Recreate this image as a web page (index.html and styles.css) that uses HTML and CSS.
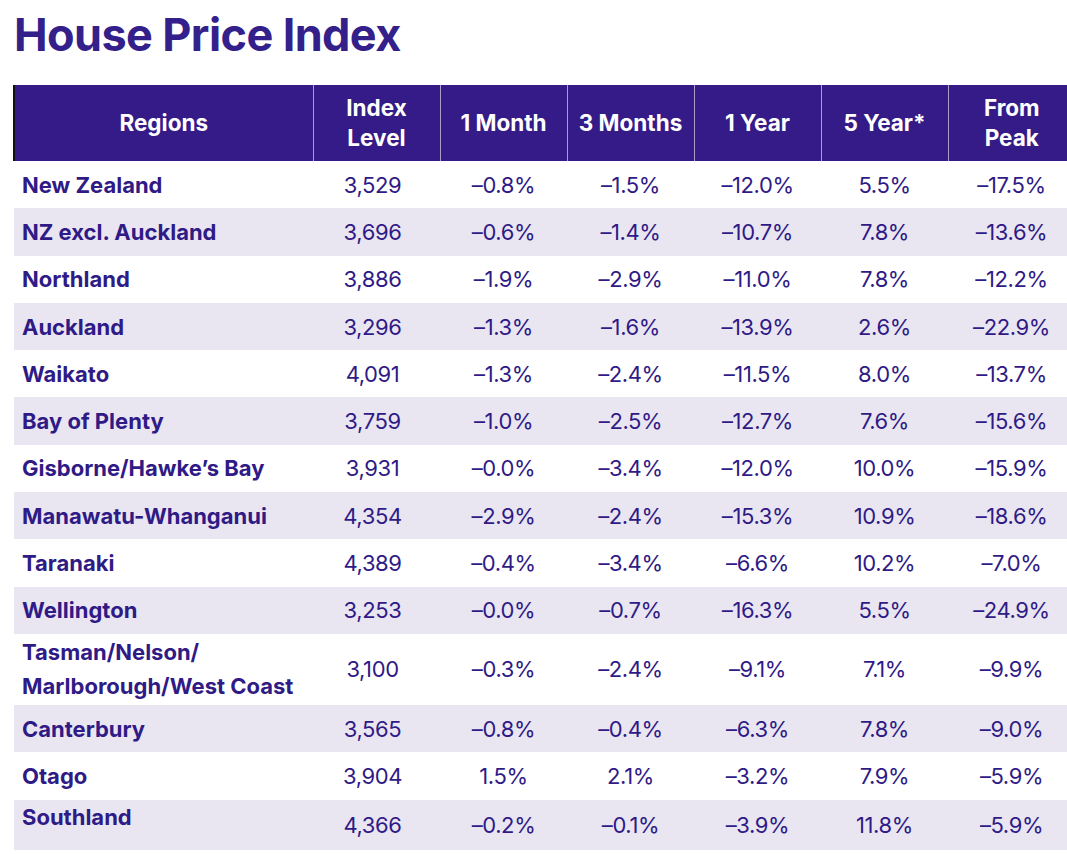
FILE: index.html
```html
<!DOCTYPE html>
<html lang="en">
<head>
<meta charset="utf-8">
<title>House Price Index</title>
<link rel="stylesheet" href="styles.css">
</head>
<body>
<div class="page">
  <h1 class="title">House Price Index</h1>
  <div class="table-wrap">
    <table class="hpi">
      <colgroup>
        <col class="c-region"><col class="c-num"><col class="c-num"><col class="c-num"><col class="c-num"><col class="c-num"><col class="c-num">
      </colgroup>
      <thead>
        <tr>
          <th class="first">Regions</th>
          <th>Index<br>Level</th>
          <th>1 Month</th>
          <th>3 Months</th>
          <th>1 Year</th>
          <th>5 Year*</th>
          <th>From<br>Peak</th>
        </tr>
      </thead>
      <tbody>
        <tr><td class="region">New Zealand</td><td class="idx">3,529</td><td>–0.8%</td><td>–1.5%</td><td>–12.0%</td><td>5.5%</td><td>–17.5%</td></tr>
        <tr class="alt"><td class="region">NZ excl. Auckland</td><td class="idx">3,696</td><td>–0.6%</td><td>–1.4%</td><td>–10.7%</td><td>7.8%</td><td>–13.6%</td></tr>
        <tr><td class="region">Northland</td><td class="idx">3,886</td><td>–1.9%</td><td>–2.9%</td><td>–11.0%</td><td>7.8%</td><td>–12.2%</td></tr>
        <tr class="alt"><td class="region">Auckland</td><td class="idx">3,296</td><td>–1.3%</td><td>–1.6%</td><td>–13.9%</td><td>2.6%</td><td>–22.9%</td></tr>
        <tr><td class="region">Waikato</td><td class="idx">4,091</td><td>–1.3%</td><td>–2.4%</td><td>–11.5%</td><td>8.0%</td><td>–13.7%</td></tr>
        <tr class="alt"><td class="region">Bay of Plenty</td><td class="idx">3,759</td><td>–1.0%</td><td>–2.5%</td><td>–12.7%</td><td>7.6%</td><td>–15.6%</td></tr>
        <tr><td class="region">Gisborne/Hawke’s Bay</td><td class="idx">3,931</td><td>–0.0%</td><td>–3.4%</td><td>–12.0%</td><td>10.0%</td><td>–15.9%</td></tr>
        <tr class="alt"><td class="region">Manawatu-Whanganui</td><td class="idx">4,354</td><td>–2.9%</td><td>–2.4%</td><td>–15.3%</td><td>10.9%</td><td>–18.6%</td></tr>
        <tr><td class="region">Taranaki</td><td class="idx">4,389</td><td>–0.4%</td><td>–3.4%</td><td>–6.6%</td><td>10.2%</td><td>–7.0%</td></tr>
        <tr class="alt"><td class="region">Wellington</td><td class="idx">3,253</td><td>–0.0%</td><td>–0.7%</td><td>–16.3%</td><td>5.5%</td><td>–24.9%</td></tr>
        <tr class="tall"><td class="region">Tasman/Nelson/<br>Marlborough/West Coast</td><td class="idx">3,100</td><td>–0.3%</td><td>–2.4%</td><td>–9.1%</td><td>7.1%</td><td>–9.9%</td></tr>
        <tr class="alt"><td class="region">Canterbury</td><td class="idx">3,565</td><td>–0.8%</td><td>–0.4%</td><td>–6.3%</td><td>7.8%</td><td>–9.0%</td></tr>
        <tr><td class="region">Otago</td><td class="idx">3,904</td><td>1.5%</td><td>2.1%</td><td>–3.2%</td><td>7.9%</td><td>–5.9%</td></tr>
        <tr class="alt last"><td class="region">Southland</td><td class="idx">4,366</td><td>–0.2%</td><td>–0.1%</td><td>–3.9%</td><td>11.8%</td><td>–5.9%</td></tr>
      </tbody>
    </table>
  </div>
</div>
</body>
</html>
```
FILE: styles.css
```css
html, body {
  margin: 0;
  padding: 0;
  background: #ffffff;
}
body {
  font-family: "Inter", "Lato", sans-serif;
  color: #2f1a86;
  overflow: hidden;
}
.page {
  padding: 0 0 0 13px;
}
.title {
  margin: 0;
  padding: 9px 0 0 1px;
  height: 85px;
  box-sizing: border-box;
  font-size: 45px;
  line-height: 52px;
  font-weight: 700;
  color: #34208b;
  letter-spacing: -0.6px;
}
.table-wrap {
  width: 1062px;
}
.hpi {
  border-collapse: collapse;
  table-layout: fixed;
  width: 1061px;
}
.c-region { width: 299px; }
.c-num { width: 127px; }
.hpi th {
  background: #341b87;
  color: #ffffff;
  font-weight: 700;
  font-size: 22.5px;
  line-height: 30px;
  height: 76px;
  padding: 0;
  text-align: center;
  border-left: 1px solid #a79ec9;
  box-sizing: border-box;
}
.hpi th.first {
  border-left: 2px solid #111111;
}
.hpi td {
  font-size: 22px;
  line-height: 30px;
  height: 47.3px;
  padding: 0;
  text-align: center;
  font-weight: 400;
  letter-spacing: -0.4px;
  box-sizing: border-box;
}
.hpi td.idx {
  padding-right: 8px;
}
.hpi td.region {
  text-align: left;
  padding-left: 8px;
  font-weight: 700;
  letter-spacing: 0;
}
.hpi tr.alt td {
  background: #e9e6f2;
}
.hpi tr.tall td {
  height: 71px;
  line-height: 34px;
}
.hpi tr.last td {
  height: 50px;
}
.hpi tr.last td.region {
  vertical-align: top;
  padding-top: 2px;
}
```
